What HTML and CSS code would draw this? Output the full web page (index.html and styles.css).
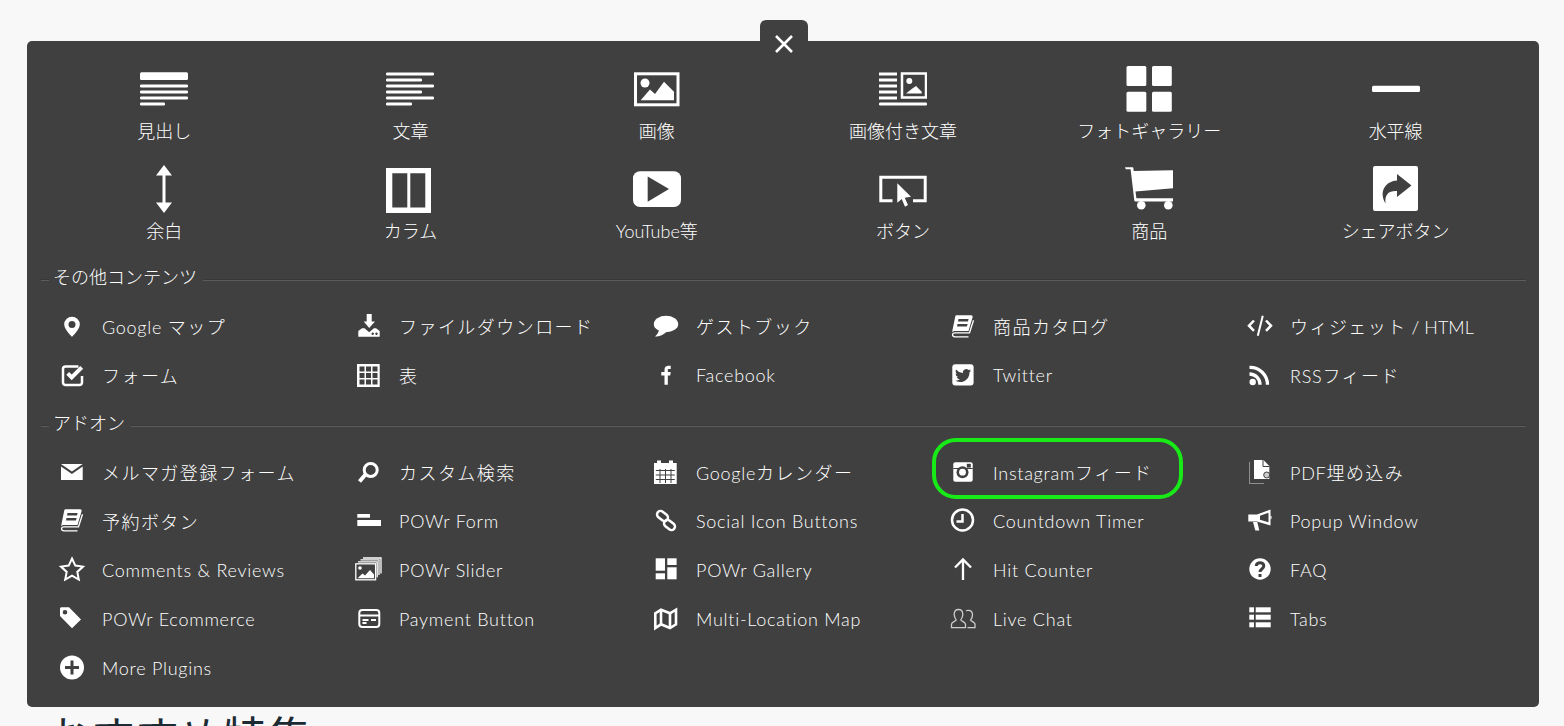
FILE: index.html
```html
<!DOCTYPE html>
<html lang="ja">

<head>
    <meta charset="UTF-8">
    <title>コンテンツを追加</title>
    <link rel="stylesheet" href="styles.css">
</head>

<body>
    <div class="panel">
        <button class="close" type="button" aria-label="閉じる">
            <svg viewBox="0 0 18 18" class="close-x"><path d="M1 1l16 16M17 1L1 17" /></svg>
        </button>

        <div class="big-grid">
            <a class="big-item">
                <svg class="big-ic" viewBox="0 0 48 48"><rect y="7.3" width="48" height="7.7" rx="1.5" /><rect y="19.5" width="48" height="3" rx="1.2" /><rect y="25.5" width="48" height="3" rx="1.2" /><rect y="31.5" width="48" height="3" rx="1.2" /><rect y="37.5" width="25" height="3" rx="1.2" /></svg>
                <span>見出し</span>
            </a>
            <a class="big-item">
                <svg class="big-ic" viewBox="0 0 48 48"><rect y="7.5" width="48" height="3" rx="1.2" /><rect y="13.5" width="36" height="3" rx="1.2" /><rect y="19.5" width="48" height="3" rx="1.2" /><rect y="25.5" width="36" height="3" rx="1.2" /><rect y="31.5" width="48" height="3" rx="1.2" /><rect y="37.5" width="26" height="3" rx="1.2" /></svg>
                <span>文章</span>
            </a>
            <a class="big-item">
                <svg class="big-ic" viewBox="0 0 48 48"><rect class="line" x="2.5" y="8.8" width="42.5" height="31" stroke-width="3" /><circle cx="12" cy="18" r="4.5" /><path d="M7.7 35.3L17 24.5l5 4.5 9-12.3 10 10v8.6z" /></svg>
                <span>画像</span>
            </a>
            <a class="big-item">
                <svg class="big-ic" viewBox="0 0 48 48"><rect y="7.5" width="18" height="3" /><rect y="13.5" width="18" height="3" /><rect y="19.5" width="18" height="3" /><rect y="25.5" width="18" height="3" /><rect y="31.5" width="18" height="3" /><rect y="37.5" width="48" height="3" rx="1.2" /><rect class="line" x="23" y="8.5" width="24" height="24" stroke-width="2.5" /><circle cx="30.3" cy="16" r="3" /><path d="M27 28.5l5.7-4.5 4.3-3 5.7 5.7v1.8z" /></svg>
                <span>画像付き文章</span>
            </a>
            <a class="big-item">
                <svg class="big-ic" viewBox="0 0 48 48"><rect x="1.500" y="1" width="19.800" height="20" rx="1.5" /><rect x="27" y="1" width="19.800" height="20" rx="1.5" /><rect x="1.500" y="26.7" width="19.800" height="20" rx="1.5" /><rect x="27" y="26.7" width="19.800" height="20" rx="1.5" /></svg>
                <span>フォトギャラリー</span>
            </a>
            <a class="big-item">
                <svg class="big-ic" viewBox="0 0 48 48"><rect y="20.7" width="48" height="6.3" rx="1.5" /></svg>
                <span>水平線</span>
            </a>

            <a class="big-item">
                <svg class="big-ic" viewBox="0 0 48 48"><path d="M24 0l8 10.500h-6.500v27H32L24 48l-8-10.500h6.500v-27H16z" /></svg>
                <span>余白</span>
            </a>
            <a class="big-item">
                <svg class="big-ic" viewBox="0 0 48 48"><path fill-rule="evenodd" d="M0 3h45v45H0zm6.300 5.300V42.500h15V8.300zm18 0V42.500h15V8.300z" /></svg>
                <span>カラム</span>
            </a>
            <a class="big-item">
                <svg class="big-ic" viewBox="0 0 48 48"><rect y="6.300" width="48" height="35.700" rx="7" /><path class="hole" d="M14.700 11.500L36 24 14.700 36.700z" /></svg>
                <span>YouTube等</span>
            </a>
            <a class="big-item">
                <svg class="big-ic" viewBox="0 0 48 48"><path class="line" stroke-width="3" d="M13.500 35.800H1.800V12.200h44.400v23.600H34" /><path d="M18.300 18.300L32 31.700l-6.300 1 3.300 7.300-3 1.700-3.300-7.700-4.400 3.700z" /></svg>
                <span>ボタン</span>
            </a>
            <a class="big-item">
                <svg class="big-ic" viewBox="0 0 48 48"><path d="M0 2.300h7.300c.7 0 1 .4 1.100 1l.3 2.700 38.800-.8c.3 0 .5.200.5.500v17.600l-37.500 3.300.9 6.700h36.600v3.300H10.500c-.7 0-1.100-.4-1.200-1L5.600 4.300H.8z" /><circle cx="16.300" cy="40.300" r="4.300" /><circle cx="43.300" cy="40.300" r="4.300" /></svg>
                <span>商品</span>
            </a>
            <a class="big-item">
                <svg class="big-ic" viewBox="0 0 48 48"><rect x="1" y="1" width="45" height="45" rx="2" /><path class="hole" d="M39.500 20.500L25 9v6.500C15 16 6 25 13.500 38.500 12.500 29 17 25.500 25 26v6z" /></svg>
                <span>シェアボタン</span>
            </a>
        </div>

        <h3 class="sec-title"><span>その他コンテンツ</span></h3>
        <div class="list">
            <a class="item">
                <svg class="ic" viewBox="0 0 32 32"><path fill-rule="evenodd" d="M16 6.700a7.800 7.800 0 0 0-7.800 7.800c0 5 7.800 12.200 7.800 12.200s7.800-7.200 7.800-12.200A7.800 7.800 0 0 0 16 6.700zm0 4.300a3.500 3.500 0 1 1 0 7 3.500 3.500 0 0 1 0-7z" /></svg>
                <span>Google <span class="ja">マップ</span></span>
            </a>
            <a class="item">
                <svg class="ic" viewBox="0 0 32 32"><path d="M13.700 4h5v7.500H22L16.200 18l-5.500-6.500h3z" /><path d="M5.300 26.700V21L9 18.300h2.500l4.700 4 4.700-4H23l3.700 2.700v5.700z" /><circle class="hole" cx="19.700" cy="23.700" r="1.200" /><circle class="hole" cx="23.500" cy="23.700" r="1.200" /></svg>
                <span class="ja">ファイルダウンロード</span>
            </a>
            <a class="item">
                <svg class="ic" viewBox="0 0 32 32"><ellipse cx="16" cy="14" rx="12.200" ry="8.300" /><path d="M9 19c0 3-2 6-4 7.500 5 0 9-2 11-4.500z" /></svg>
                <span class="ja">ゲストブック</span>
            </a>
            <a class="item">
                <svg class="ic" viewBox="0 0 32 32"><use href="#book" y="1" /></svg>
                <span class="ja">商品カタログ</span>
            </a>
            <a class="item">
                <svg class="ic" viewBox="0 0 32 32"><path class="line" stroke-width="2.500" d="M10 10.500l-5 5.200 5 5.200M22 10.500l5 5.200-5 5.200" /><path class="line" stroke-width="2" d="M18.800 5.700l-5 20" /></svg>
                <span><span class="ja">ウィジェット</span><span class="plain"> / HTML</span></span>
            </a>

            <a class="item">
                <svg class="ic" viewBox="0 0 32 32"><path class="line" stroke-width="2.500" d="M22.500 7.500H9.500a2.500 2.500 0 0 0-2.500 2.500v13.500a2.500 2.500 0 0 0 2.500 2.500h14a2.500 2.500 0 0 0 2.500-2.500V17" /><path class="line" stroke-width="4" d="M11.700 14.300l4 4 10-10" /></svg>
                <span class="ja">フォーム</span>
            </a>
            <a class="item">
                <svg class="ic" viewBox="0 0 32 32"><rect x="4" y="5" width="22.700" height="23" /><path class="hole" d="M6.500 7.500h5v5h-5zM13 7.500h5v5h-5zM19.500 7.500h5v5h-5zM6.500 14h5v5h-5zM13 14h5v5h-5zM19.500 14h5v5h-5zM6.500 20.500h5v5h-5zM13 20.500h5v5h-5zM19.500 20.500h5v5h-5z" /></svg>
                <span class="ja">表</span>
            </a>
            <a class="item">
                <svg class="ic" viewBox="0 0 32 32"><path d="M14.500 25.700v-9.200h-3.200V13h3.200v-2.500c0-2.500 1.500-3.800 4-3.800h2.200V10H19c-1 0-1.200.5-1.200 1.200V13h2.900l-.5 3.500h-2.400v9.200z" /></svg>
                <span>Facebook</span>
            </a>
            <a class="item">
                <svg class="ic" viewBox="0 0 32 32"><rect x="5.300" y="5.300" width="21.300" height="21.300" rx="3" /><path class="hole" transform="translate(8 8.500) scale(.67)" d="M23.953 4.570a10 10 0 0 1-2.825.775 4.958 4.958 0 0 0 2.163-2.723c-.951.555-2.005.959-3.127 1.184a4.920 4.920 0 0 0-8.384 4.482C7.690 8.095 4.067 6.130 1.640 3.162a4.822 4.822 0 0 0-.666 2.475c0 1.710.870 3.213 2.188 4.096a4.904 4.904 0 0 1-2.228-.616v.060a4.923 4.923 0 0 0 3.946 4.827 4.996 4.996 0 0 1-2.212.085 4.936 4.936 0 0 0 4.604 3.417 9.867 9.867 0 0 1-6.102 2.105c-.390 0-.779-.023-1.170-.067a13.995 13.995 0 0 0 7.557 2.209c9.053 0 13.998-7.496 13.998-13.985 0-.210 0-.420-.015-.630A9.935 9.935 0 0 0 24 4.590z" /></svg>
                <span>Twitter</span>
            </a>
            <a class="item">
                <svg class="ic" viewBox="0 0 32 32"><circle cx="8.700" cy="23" r="3.200" /><path class="line" stroke-width="3.300" d="M5.500 15A10.500 10.500 0 0 1 16 25.800M5.500 8.300a17.500 17.500 0 0 1 18 17.500" /></svg>
                <span>RSS<span class="ja">フィード</span></span>
            </a>
        </div>

        <h3 class="sec-title"><span>アドオン</span></h3>
        <div class="list">
            <a class="item">
                <svg class="ic" viewBox="0 0 32 32"><path d="M5 8h21.700L15.900 15.500z" /><path d="M5 10.500L15.900 18l10.800-7.500V24H5z" /></svg>
                <span class="ja">メルマガ登録フォーム</span>
            </a>
            <a class="item">
                <svg class="ic" viewBox="0 0 32 32"><circle class="line" cx="17.700" cy="14" r="6.500" stroke-width="3" /><path class="line" stroke-width="4" d="M12.500 18.500l-6 7" /></svg>
                <span class="ja">カスタム検索</span>
            </a>
            <a class="item">
                <svg class="ic" viewBox="0 0 32 32"><path d="M4 7h3V4.500h4V7h8V4.500h4V7h3.700v21H4z" /><path class="hole" d="M5.800 14h19v1h-19zM5.800 18.500h19v1h-19zM5.800 23h19v1h-19zM9.500 13h1v14h-1zM15 13h1v14h-1zM20.500 13h1v14h-1z" /></svg>
                <span>Google<span class="ja">カレンダー</span></span>
            </a>
            <a class="item is-marked">
                <svg class="ic" viewBox="0 0 32 32"><rect x="6.300" y="6.300" width="19.400" height="19.400" rx="2" /><rect class="hole" x="6.300" y="12" width="19.400" height="1" /><circle class="hole" cx="15.500" cy="16.200" r="6" /><circle cx="15.500" cy="16.200" r="3.400" /><rect class="hole" x="19.800" y="7.800" width="4" height="3.800" /></svg>
                <span>Instagram<span class="ja">フィード</span></span>
            </a>
            <a class="item">
                <svg class="ic" viewBox="0 0 32 32"><path d="M10 4h9.500l5.800 6v13H10z" /><path class="line-dark" d="M19 4v6.500h6.300" /><path class="dots" d="M5.500 6.500v21H20" /><circle class="dot-badge" cx="22.700" cy="19" r="3" /></svg>
                <span>PDF<span class="ja">埋め込み</span></span>
            </a>

            <a class="item">
                <svg class="ic" viewBox="0 0 32 32"><defs><g id="book"><path fill-rule="evenodd" d="M9.800 4.300h14.400c1 0 1.700.9 1.400 1.900L21.500 20H8c-1.400 0-2.500.5-3 1.500l3.200-15.800c.2-.9.800-1.400 1.600-1.400zm1.700 3.800l-.5 2.500h10l.6-2.500zm-1 4.800l-.5 2.500h10l.6-2.500z" /><path class="line" stroke-width="1.300" d="M21.500 25.800H8c-3.300 0-3.300-4 0-4h14.500l4-12.500" /></g></defs><use href="#book" /></svg>
                <span class="ja">予約ボタン</span>
            </a>
            <a class="item">
                <svg class="ic" viewBox="0 0 32 32"><rect x="4.300" y="9" width="12.700" height="3.700" /><rect x="4.300" y="15" width="23.700" height="6" /></svg>
                <span>POWr Form</span>
            </a>
            <a class="item">
                <svg class="ic" viewBox="0 0 32 32"><rect class="line" x="6.500" y="7.500" width="12" height="7" rx="3.500" stroke-width="2.500" transform="rotate(38 12.500 11)" /><rect class="line" x="13.500" y="16.500" width="12" height="7" rx="3.500" stroke-width="2.500" transform="rotate(38 19.500 20)" /></svg>
                <span>Social Icon Buttons</span>
            </a>
            <a class="item">
                <svg class="ic" viewBox="0 0 32 32"><circle class="line" cx="15.500" cy="15" r="10.500" stroke-width="2.500" /><path class="line" stroke-width="2.500" d="M15.500 9v7.500H9.500" /></svg>
                <span>Countdown Timer</span>
            </a>
            <a class="item">
                <svg class="ic" viewBox="0 0 32 32"><path d="M4.300 9.500H13l13.500-5v16L13 16.500H4.300z" /><path d="M9 17h4.300l2 8.500h-4z" /><path class="hole" d="M16 10.800l8.500-3.100v9.600L16 14.800z" /><path d="M26.500 10.500c1.500.3 1.500 3.500 0 4z" /></svg>
                <span>Popup Window</span>
            </a>

            <a class="item">
                <svg class="ic" viewBox="0 0 32 32"><polygon class="line" stroke-width="2" points="16,4.500 19.300,11.600 27,12.600 21.300,17.900 22.800,25.500 16,21.700 9.200,25.500 10.700,17.900 5,12.600 12.700,11.600" /></svg>
                <span>Comments &amp; Reviews</span>
            </a>
            <a class="item">
                <svg class="ic" viewBox="0 0 32 32"><rect class="line thin-line" x="2.800" y="9.800" width="19.800" height="16" /><circle cx="7" cy="14" r="1.800" /><path d="M4.500 24.200l5-4.800 2.500 2 5-5.500 4 4.500v3.800z" /><path class="line thin-line" d="M5 7.800h19.200v15.500M7.500 5.800h18.500V21M10 4h18v15.500" /></svg>
                <span>POWr Slider</span>
            </a>
            <a class="item">
                <svg class="ic" viewBox="0 0 32 32"><rect x="5.700" y="4.300" width="9.300" height="12.400" /><rect x="5.700" y="19.300" width="9.300" height="6" /><rect x="17.300" y="4.300" width="9.300" height="6.700" /><rect x="17.300" y="13.300" width="9.300" height="12" /></svg>
                <span>POWr Gallery</span>
            </a>
            <a class="item">
                <svg class="ic" viewBox="0 0 32 32"><path class="line" stroke-width="2.300" d="M16 26V6.500M8 13.500l8-8 8 8" /></svg>
                <span>Hit Counter</span>
            </a>
            <a class="item">
                <svg class="ic" viewBox="0 0 32 32"><circle cx="16" cy="15" r="10.700" /><path class="line-hole" d="M12.300 12c0-4.500 7.500-4.500 7.500 0 0 3-3.800 3-3.800 6" /><rect class="hole" x="14.500" y="20" width="3" height="3" /></svg>
                <span>FAQ</span>
            </a>

            <a class="item">
                <svg class="ic" viewBox="0 0 32 32"><path fill-rule="evenodd" d="M5.500 4.300H13L25 16.500l-9 8.800L4 13V5.800c0-.8.700-1.500 1.500-1.500zm3.500 2.700a2.300 2.300 0 1 0 0 4.600 2.300 2.300 0 0 0 0-4.600z" /></svg>
                <span>POWr Ecommerce</span>
            </a>
            <a class="item">
                <svg class="ic" viewBox="0 0 32 32"><rect class="line" x="6.300" y="7" width="20" height="17" rx="3" stroke-width="2" /><path class="line" stroke-width="1.800" d="M6.300 12.500h20M9.500 17h6M18 17h5M9.500 20h4" /></svg>
                <span>Payment Button</span>
            </a>
            <a class="item">
                <svg class="ic" viewBox="0 0 32 32"><path class="line" stroke-width="2.600" d="M5.300 10.300L11 6.700l9 3.600 6-3.600v14.600L20 25l-9-3.700-5.700 3.700z" /><path class="line" stroke-width="2.600" d="M11 6.700v14.600M20 10.300V25" /></svg>
                <span>Multi-Location Map</span>
            </a>
            <a class="item">
                <svg class="ic" viewBox="0 0 32 32"><path class="line people" d="M4.500 24.700v-3.500c0-2 4-3 4.700-4.200-1.200-1.700-2-3-2-5.500 0-3 1.700-5 4.300-5s4.300 2 4.300 5c0 2.500-.8 3.800-2 5.500.7 1.200 4.700 2.200 4.700 4.200v3.500zM19 7.800c.7-.4 1.500-.5 2.300-.5 2.600 0 4.200 2 4.200 4.800 0 2.300-.8 3.700-1.900 5 .7 1.100 4.400 2 4.400 4v3.600h-7.500" /></svg>
                <span>Live Chat</span>
            </a>
            <a class="item">
                <svg class="ic" viewBox="0 0 32 32"><rect x="5.300" y="4.300" width="4.700" height="5" /><rect x="11.700" y="4.300" width="15" height="5" /><rect x="5.300" y="11.700" width="4.700" height="5" /><rect x="11.700" y="11.700" width="15" height="5" /><rect x="5.300" y="19.300" width="4.700" height="5" /><rect x="11.700" y="19.300" width="15" height="5" /></svg>
                <span>Tabs</span>
            </a>

            <a class="item">
                <svg class="ic" viewBox="0 0 32 32"><circle cx="16" cy="15.500" r="12" /><path class="line-hole" d="M16 8.500v14M9 15.500h14" /></svg>
                <span>More Plugins</span>
            </a>
        </div>
    </div>

    <h2 class="next-title">おすすめ特集</h2>
</body>

</html>
```

FILE: styles.css
```css
html,
body {
    height: 100%;
    overflow: hidden;
}

body {
    margin: 0;
    padding: 41px 25px 0 27px;
    background: #f8f8f8;
    font-family: Lato, "Noto Sans CJK JP", sans-serif;
    color: #fff;
}

.panel {
    position: relative;
    padding: 24px 13px 14.5px 14px;
    background: #404040;
    border-radius: 5px;
}

.close {
    position: absolute;
    top: -21px;
    left: 733px;
    display: flex;
    align-items: center;
    justify-content: center;
    width: 48px;
    height: 46px;
    padding: 0;
    border: 0;
    border-radius: 6px 6px 0 0;
    background: #404040;
}

.close-x {
    width: 18px;
    height: 18px;
    margin-top: 2px;
    fill: none;
    stroke: #fff;
    stroke-width: 2.6;
}

/* 上の大きいアイコン */
.big-grid {
    display: grid;
    grid-template-columns: repeat(6, 246.3px);
    grid-auto-rows: 100px;
}

.big-item {
    display: flex;
    flex-direction: column;
    align-items: center;
    font-size: 18px;
    font-weight: 300;
    line-height: 27px;
}

.big-ic {
    display: block;
    width: 48px;
    height: 48px;
    margin-bottom: 5px;
    fill: #fff;
}

/* 見出し */
.sec-title {
    display: flex;
    align-items: center;
    gap: 4px;
    height: 24px;
    margin: 0;
    font-size: 18px;
    font-weight: 300;
    line-height: 26px;
}

.sec-title span {
    margin-right: 2px;
}

.sec-title::before,
.sec-title::after {
    content: "";
    height: 0;
    margin-top: 5px;
    border-top: 1px solid #383838;
    border-bottom: 1px solid #5c5c5c;
}

.sec-title::before {
    width: 8px;
}

.sec-title::after {
    flex: 1;
}

/* リスト */
.list {
    display: grid;
    grid-template-columns: repeat(5, 297px);
    grid-auto-rows: 49px;
    margin: 12.5px 0 11.5px;
}

.list:last-child {
    margin-bottom: 0;
}

.item {
    position: relative;
    display: flex;
    align-items: center;
    gap: 14px;
    padding-left: 15px;
    font-size: 18px;
    font-weight: 300;
    letter-spacing: .73px;
    white-space: nowrap;
}

.ja {
    letter-spacing: 1.45px;
}

.plain {
    letter-spacing: 0;
}

.is-marked::after {
    content: "";
    position: absolute;
    top: -10px;
    left: 0;
    box-sizing: border-box;
    width: 251px;
    height: 61px;
    border: 4.5px solid #18ea18;
    border-radius: 24px;
}

.ic {
    display: block;
    flex: none;
    width: 32px;
    height: 32px;
    fill: #fff;
}

.hole {
    fill: #404040;
}

.line {
    fill: none;
    stroke: #fff;
}

.line-hole {
    fill: none;
    stroke: #404040;
    stroke-width: 3;
}

.line-dark {
    fill: none;
    stroke: #404040;
    stroke-width: 1;
}

.thin-line {
    stroke-width: 1.3;
}

.people {
    stroke: #ccc;
    stroke-width: 1.3;
}

.dots {
    fill: none;
    stroke: #ddd;
    stroke-width: 1;
    stroke-dasharray: 1 1;
}

.dot-badge {
    fill: #ccc;
    stroke: #404040;
    stroke-width: 1;
}

.next-title {
    margin: 0;
    padding: 0 0 0 20px;
    font-size: 44px;
    font-weight: 400;
    line-height: 60px;
    color: #1c2a33;
}
```
